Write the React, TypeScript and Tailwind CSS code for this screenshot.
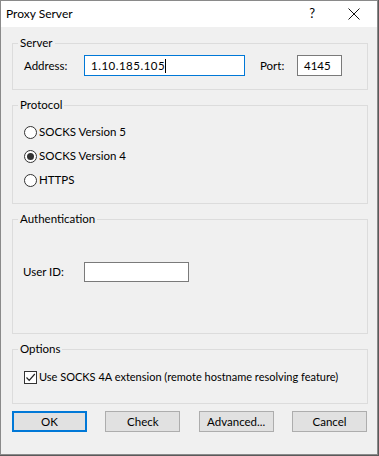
import React from "react";

const font = { fontFamily: '"Segoe UI", Lato, "Noto Sans", sans-serif' };

function Radio({ label, checked }: { label: string; checked?: boolean }) {
  return (
    <div className="flex h-[16px] items-center">
      <span className="flex h-[13px] w-[13px] items-center justify-center rounded-full border border-[#333] bg-white">
        {checked && <span className="h-[7px] w-[7px] rounded-full bg-[#333]" />}
      </span>
      <span className="ml-[2px]">{label}</span>
    </div>
  );
}

function Group({ title, className, children }: { title: string; className: string; children?: React.ReactNode }) {
  return (
    <fieldset className={`border border-[#dcdcdc] ${className}`}>
      <legend className="ml-[5px] px-[2px] leading-[16px]">{title}</legend>
      {children}
    </fieldset>
  );
}

export default function App() {
  return (
    <div className="h-[456px] w-[379px] whitespace-nowrap bg-[#5a5a5a] text-[11.5px] text-black" style={font}>
      <div className="flex h-[455px] w-[378px] flex-col border border-[#8a8a8a] bg-[#f0f0f0]">
        {/* title bar */}
        <div className="flex h-[26px] items-center bg-white pl-[5px]">
          <span className="text-[12px]">Proxy Server</span>
          <span className="ml-auto mr-[33px] text-[13px]">?</span>
          <svg width="12" height="12" viewBox="0 0 12 12" className="mr-[17px]">
            <path d="M0.5 0.5 L11.5 11.5 M11.5 0.5 L0.5 11.5" stroke="#111" strokeWidth="1" />
          </svg>
        </div>

        <div className="flex flex-col gap-[7px] pl-[11px] pr-[9px] pt-[8px]">
          <Group title="Server" className="h-[55px]">
            <div className="mt-[4px] flex items-center">
              <span className="ml-[11px] w-[60px]">Address:</span>
              <div className="flex h-[21px] w-[161px] items-center border border-[#0078d7] bg-white pl-[6px]">
                <span className="tracking-[0.5px]">1.10.185.105</span>
                <span className="h-[14px] w-px bg-black" />
              </div>
              <span className="ml-[15px] w-[37px]">Port:</span>
              <div className="flex h-[21px] w-[45px] items-center border border-[#7a7a7a] bg-white pl-[6px]">
                4145
              </div>
            </div>
          </Group>

          <Group title="Protocol" className="h-[107px]">
            <div className="ml-[11px] mt-[11px] flex flex-col gap-[8px]">
              <Radio label="SOCKS Version 5" />
              <Radio label="SOCKS Version 4" checked />
              <Radio label="HTTPS" />
            </div>
          </Group>

          <Group title="Authentication" className="h-[123px]">
            <div className="mt-[35px] flex items-center">
              <span className="ml-[10px] w-[61px]">User ID:</span>
              <div className="h-[20px] w-[105px] border border-[#7a7a7a] bg-white" />
            </div>
          </Group>

          <Group title="Options" className="h-[63px]">
            <div className="ml-[11px] mt-[12px] flex h-[16px] items-center">
              <span className="flex h-[13px] w-[13px] items-center justify-center border border-[#333] bg-white">
                <svg width="11" height="11" viewBox="0 0 11 11">
                  <path d="M1.5 5.5 L4.2 8.3 L9.8 2" stroke="#222" strokeWidth="1.2" fill="none" />
                </svg>
              </span>
              <span className="ml-[2px] text-[11px]">Use SOCKS 4A extension (remote hostname resolving feature)</span>
            </div>
          </Group>

          <div className="flex justify-between pr-[1px]">
            <button className="h-[21px] w-[75px] border-2 border-[#0078d7] bg-[#e1e1e1]">OK</button>
            <button className="h-[21px] w-[75px] border border-[#adadad] bg-[#e1e1e1]">Check</button>
            <button className="h-[21px] w-[75px] border border-[#adadad] bg-[#e1e1e1]">Advanced...</button>
            <button className="h-[21px] w-[75px] border border-[#adadad] bg-[#e1e1e1]">Cancel</button>
          </div>
        </div>
      </div>
    </div>
  );
}
